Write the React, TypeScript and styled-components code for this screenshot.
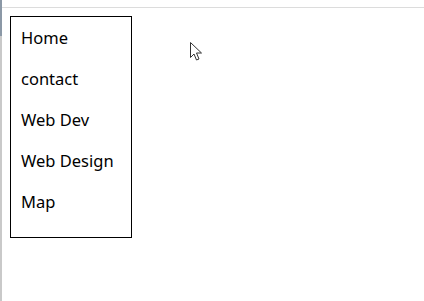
import styled, { createGlobalStyle } from 'styled-components';

const GlobalStyle = createGlobalStyle`
  html, body {
    margin: 0;
    padding: 0;
    background: #fff;
  }
  body {
    font-family: 'Noto Sans', 'Liberation Sans', sans-serif;
    color: #000;
  }
`;

const Page = styled.div`
  position: relative;
  width: 424px;
  height: 301px;
  overflow: hidden;
  display: flex;
`;

const EdgeStrip = styled.div`
  width: 2px;
  flex: none;
  background: linear-gradient(#8b98a6 0, #8b98a6 36px, #c9c9c9 36px);
`;

const Main = styled.div`
  flex: 1;
  display: flex;
  flex-direction: column;
`;

const TopRule = styled.div`
  height: 7px;
  border-bottom: 1px solid #dcdcdc;
  margin-bottom: 8px;
`;

const Menu = styled.ul`
  list-style: none;
  margin: 0 0 0 8px;
  padding: 0 0 15px;
  width: 120px;
  border: 1px solid #000;
`;

const MenuItem = styled.li`
  height: 41px;
  line-height: 41px;
  padding-left: 10px;
  font-size: 16.5px;
  white-space: nowrap;
`;

const Cursor = styled.svg`
  position: absolute;
  left: 190px;
  top: 42px;
`;

const items = ['Home', 'contact', 'Web Dev', 'Web Design', 'Map'];

export default function App() {
  return (
    <Page>
      <GlobalStyle />
      <EdgeStrip />
      <Main>
        <TopRule />
        <Menu>
          {items.map((label) => (
            <MenuItem key={label}>{label}</MenuItem>
          ))}
        </Menu>
      </Main>
      <Cursor width="14" height="22" viewBox="0 0 14 22">
        <path
          d="M0.5 0.5 L0.5 15.5 L4 12 L6.5 18 L9 17 L6.5 11 L11.5 11 Z"
          fill="#fff"
          stroke="#333"
          strokeWidth="1"
          strokeLinejoin="round"
        />
      </Cursor>
    </Page>
  );
}
